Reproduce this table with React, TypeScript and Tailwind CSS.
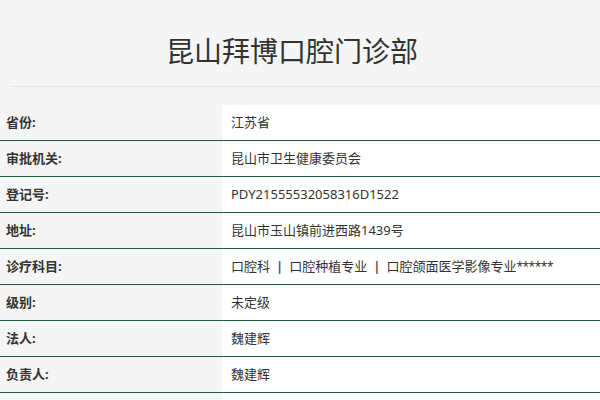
const rows: [string, React.ReactNode][] = [
  ['省份:', '江苏省'],
  ['审批机关:', '昆山市卫生健康委员会'],
  ['登记号:', 'PDY21555532058316D1522'],
  ['地址:', '昆山市玉山镇前进西路1439号'],
  [
    '诊疗科目:',
    <>
      口腔科<span className="mx-[6px] font-bold text-[#555]">|</span>口腔种植专业
      <span className="mx-[6px] font-bold text-[#555]">|</span>口腔颌面医学影像专业<span className="text-[12px] tracking-[-0.5px]">******</span>
    </>,
  ],
  ['级别:', '未定级'],
  ['法人:', '魏建辉'],
  ['负责人:', '魏建辉'],
  ['', ''],
];

export default function App() {
  return (
    <div
      className="w-[600px] h-[400px] overflow-hidden bg-[#f5f5f5] text-[#333]"
      style={{ fontFamily: '"Noto Sans", "Noto Sans CJK SC", sans-serif' }}
    >
      <div className="ml-[10px] h-[87px] border-b border-[#e6e6e6] flex items-center justify-center pr-[26px] pt-[16px]">
        <h1 className="text-[28px] leading-none text-[#333]">昆山拜博口腔门诊部</h1>
      </div>

      <div className="mt-[18px]">
        {rows.map(([label, value], i) => (
          <div key={i} className="grid grid-cols-[222px_1fr] h-[36px] border-b border-[#1f5c3a]">
            <div className="flex items-center pl-[6px] text-[13px] font-bold text-[#333]">{label}</div>
            <div className="flex items-center pl-[9px] bg-white text-[13px] text-[#333] whitespace-nowrap">{value}</div>
          </div>
        ))}
      </div>
    </div>
  );
}
